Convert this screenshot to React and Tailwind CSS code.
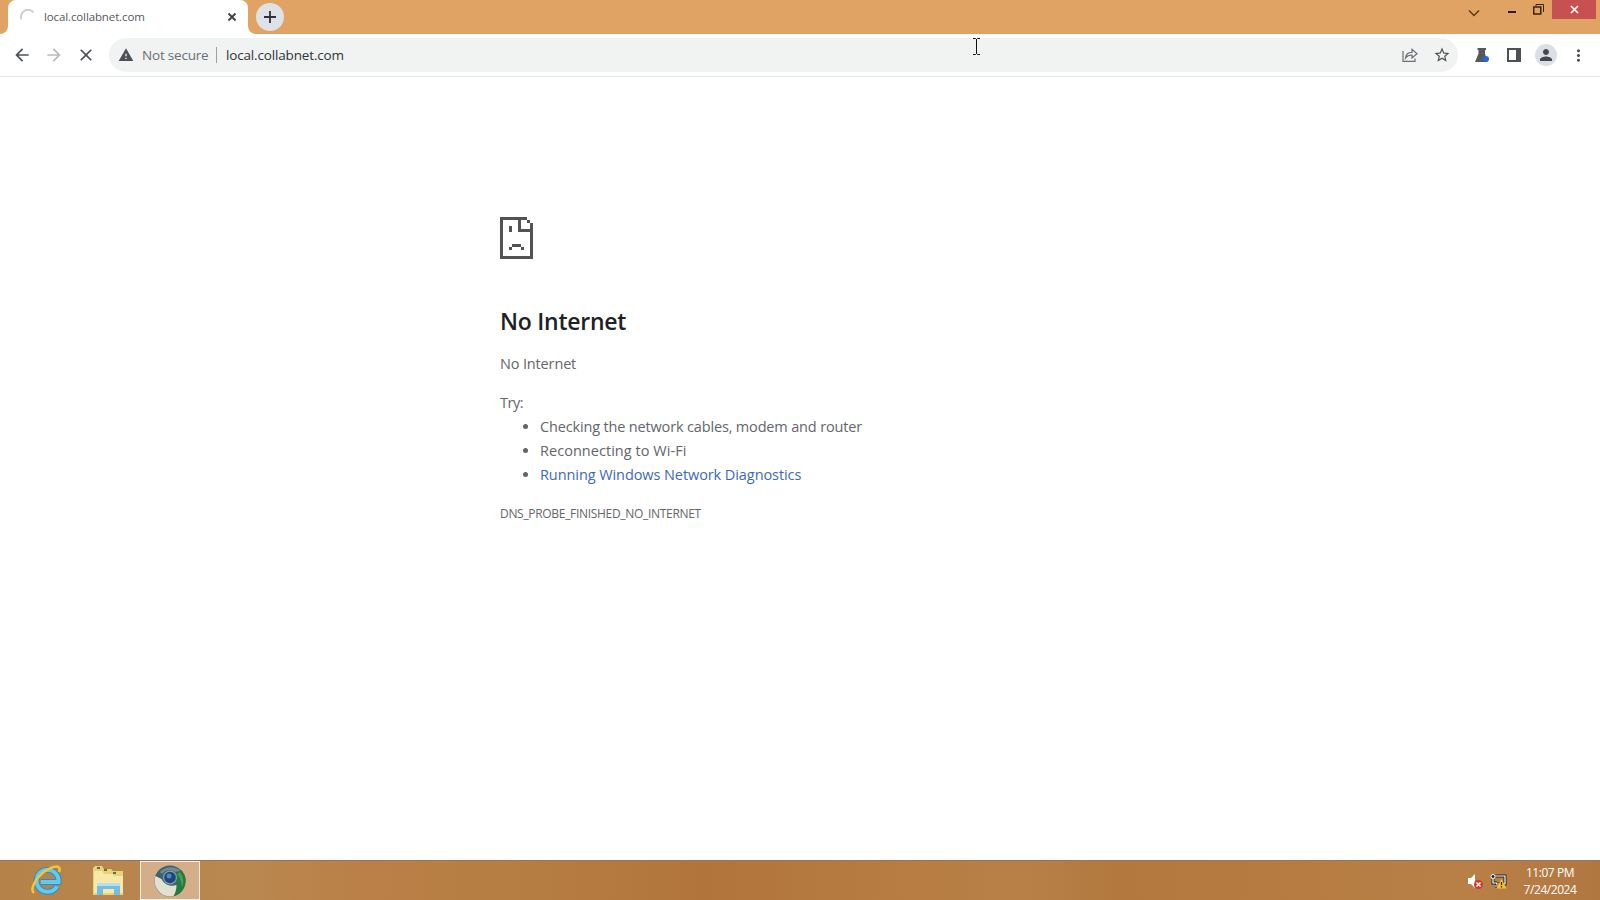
import React from 'react';
import { MdArrowBack, MdArrowForward, MdClose, MdWarning, MdStarBorder, MdMoreVert, MdPerson } from 'react-icons/md';

const tips = [
  { text: 'Checking the network cables, modem and router', className: 'tracking-[-0.16px]' },
  { text: 'Reconnecting to Wi-Fi', className: 'tracking-[0.04px]' },
  { text: 'Running Windows Network Diagnostics', className: 'tracking-[-0.08px]', link: true },
];

function TabStrip() {
  return (
    <div className="flex h-[34px] bg-[#e0a363]">
      <div className="relative ml-2 flex h-[34px] w-60 items-center rounded-t-lg bg-white pl-3">
        <svg className="absolute -left-2 bottom-0" width="8" height="8"><path d="M8 0v8H0a8 8 0 0 0 8-8Z" fill="#fff" /></svg>
        <svg className="absolute -right-2 bottom-0" width="8" height="8"><path d="M0 0v8h8a8 8 0 0 1-8-8Z" fill="#fff" /></svg>
        <svg width="16" height="16" viewBox="0 0 16 16" fill="none" stroke="#c9ccd1" strokeWidth="1.8">
          <path d="M1.5 10.5A7 7 0 0 1 13.5 3.5" />
        </svg>
        <span className="ml-2 w-[180px] text-[11.5px] leading-4 tracking-[-0.12px] text-[#55585c]">local.collabnet.com</span>
        <svg width="16" height="16" viewBox="0 0 16 16" stroke="#3c4043" strokeWidth="1.8">
          <path d="M4.5 4.5l7 7M11.5 4.5l-7 7" />
        </svg>
      </div>
      <button className="mt-[3px] ml-2 flex size-7 items-center justify-center rounded-full bg-[#dee1e6]">
        <svg width="14" height="14" viewBox="0 0 14 14" stroke="#2d3034" strokeWidth="1.8"><path d="M7 1v12M1 7h12" /></svg>
      </button>
      <div className="ml-auto flex items-start">
        <svg className="mt-[9px] mr-7" width="12" height="8" viewBox="0 0 12 8" fill="none" stroke="#5c3517" strokeWidth="1.4"><path d="M1 1.5l5 5 5-5" /></svg>
        <svg className="mt-[3px] mr-[17px]" width="8" height="12"><path d="M0 8h8v2H0z" fill="#2b1a10" /></svg>
        <svg className="mt-1 mr-2" width="11" height="11" viewBox="0 0 11 11" fill="none" stroke="#3b2313">
          <path d="M.75 3h7v7h-7z" strokeWidth="1.5" /><path d="M3 .5h7.5v7.5M3 .5V2" />
        </svg>
        <button className="mr-1 flex h-[19px] w-11 items-center justify-center bg-[#c75050]">
          <svg width="9" height="9" viewBox="0 0 9 9" stroke="#fff" strokeWidth="1.7"><path d="M1 1l7 7M8 1l-7 7" /></svg>
        </button>
      </div>
    </div>
  );
}

function Toolbar() {
  return (
    <div className="flex h-[43px] items-center border-b border-[#e3e5e8] bg-white pl-3">
      <div className="flex items-center gap-3">
        <MdArrowBack size={20} color="#4d5156" />
        <MdArrowForward size={20} color="#b9bbbe" />
        <MdClose size={20} color="#4d5156" />
      </div>
      <div className="ml-[13px] flex h-[34px] w-[1349px] items-center rounded-full bg-[#f1f3f3] pl-[9px]">
        <MdWarning size={16} color="#4d5156" />
        <span className="ml-2 w-[74px] text-[13.5px] tracking-[-0.2px] whitespace-nowrap text-[#6b6e72]">Not secure</span>
        <span className="h-4 w-px bg-[#9aa0a6]" />
        <span className="ml-[9px] text-[13.5px] tracking-[-0.16px] text-[#303336]">local.collabnet.com</span>
        <svg className="mr-[15px] ml-auto" width="16" height="16" viewBox="0 0 16 16" fill="none" stroke="#6b6e72" strokeWidth="1.2">
          <path d="M1 4v10.400h12V11.500M3.500 11c.4-3.500 2.500-5.500 6.500-5.600V2.300L15 6.700l-5 4.200V8c-3 0-5 1-6.500 3Z" />
        </svg>
        <MdStarBorder className="mr-[7px]" size={18} color="#4d5156" />
      </div>
      <div className="ml-[16px] flex items-center">
        <svg width="16" height="16" viewBox="0 0 16 16">
          <path d="M3.500 1h8.500v2h-1v3.500L13.500 15H1l3.500-8.500V3h-1z" fill="#55595e" /><circle cx="12" cy="12" r="3" fill="#2463eb" />
        </svg>
        <svg className="ml-4" width="16" height="16" viewBox="0 0 16 16">
          <path d="M1 1h14v14H1zM3 3v10h7V3z" fillRule="evenodd" fill="#4d5156" />
        </svg>
        <span className="ml-[13px] flex size-[22px] items-center justify-center rounded-full bg-[#dcdfe6]">
          <MdPerson size={18} color="#454a52" />
        </span>
        <MdMoreVert className="ml-3" size={19} color="#4d5156" />
      </div>
    </div>
  );
}

function SadPage() {
  return (
    <svg width="33" height="42" viewBox="0 0 11 14" fill="#535353" shapeRendering="crispEdges">
      <path d="M0 0h9v1H7v3h3V2h1v12H0zM1 1v12h9V5H6V1z" fillRule="evenodd" />
      <path d="M9 1h1v1H9zM3 3h1v2H3zM4 9h3v1H4zM3 10h1v1H3zM7 10h1v1H7z" />
    </svg>
  );
}

function ErrorPage() {
  return (
    <main className="flex-1 bg-white pt-[140px] pl-[500px] text-[14.5px] leading-6 text-[#646669]">
      <SadPage />
      <h1 className="mt-[46px] text-[23px] leading-8 font-semibold tracking-[-0.25px] text-[#202124]">No Internet</h1>
      <p className="mt-[15px] tracking-[-0.15px]">No Internet</p>
      <p className="mt-[15px] tracking-[-0.5px]">Try:</p>
      <ul className="list-disc pl-10">
        {tips.map(tip => (
          <li key={tip.text} className={tip.className}>
            {tip.link ? <a className="text-[#3d69b8]">{tip.text}</a> : tip.text}
          </li>
        ))}
      </ul>
      <div className="mt-[15px] text-[12px] tracking-[-0.31px]">DNS_PROBE_FINISHED_NO_INTERNET</div>
    </main>
  );
}

function ExplorerIcon() {
  return (
    <svg width="32" height="32" viewBox="0 0 32 32">
      <path d="M1 3l2-2h7l2 3h7l2 2h10v24H1z" fill="#ead27c" />
      <path d="M2 6h8l2 3h8l2 2h9v17H2z" fill="#f8e9a8" />
      <path d="M5 2h3v2H5zM12 4h3v2h-3zM21 7h3v2h-3z" fill="#4f7653" />
      <path d="M5 18h23v12h-6v-6H11v6H5z" fill="#73bfe3" />
      <path d="M5 18h23v3H5z" fill="#b5e1ef" />
    </svg>
  );
}

function IeIcon() {
  return (
    <svg width="32" height="32" viewBox="0 0 32 32" fill="none">
      <path d="M26 21.500A11 11 0 1 1 27.500 17H10" stroke="#278dcc" strokeWidth="6" />
      <path d="M26 21.500A11 11 0 1 1 27.500 17H10" stroke="#63c9ee" strokeWidth="4" />
      <path d="M3 28C-2 24 7 8 20 3c7-3 10-1 8 4" stroke="#f5c535" strokeWidth="2.500" />
    </svg>
  );
}

function ChromiumIcon() {
  return (
    <svg width="32" height="32" viewBox="0 0 32 32">
      <circle cx="16" cy="16" r="15.500" fill="#41606c" />
      <path d="M6 7C11 1 22 1 27 6l-6 1C16 4 11 5 8 9z" fill="#6f8a90" />
      <path d="M27 5a15.500 15.500 0 0 1-9 26.300C23 26 25 18 21 9z" fill="#237c3b" />
      <path d="M26 7c4 6 4 11 2 15-1-6-2-10-5-13z" fill="#4a9a59" />
      <path d="M1.500 11a15.500 15.500 0 0 0 18 20c2-3 3-7 3-11-6 2-12 0-15-6z" fill="#e2e1d0" />
      <circle cx="16" cy="12.500" r="7" fill="#7fa0b8" />
      <circle cx="16" cy="12.500" r="5.800" fill="#1d4677" />
      <circle cx="15" cy="11" r="2.500" fill="#5485b5" />
    </svg>
  );
}

function Taskbar() {
  return (
    <footer className="flex h-10 border-t border-[#96755f] bg-[linear-gradient(90deg,#b5834a_0%,#b98750_16%,#ba8047_22%,#b67d42_33%,#b1753b_44%,#b67b40_54%,#b88047_64%,#b2783e_70%,#b67c42_82%,#b88047_92%,#b07840_100%)]">
      <div className="flex h-full w-[140px] items-center gap-[29px] pl-[31px]">
        <IeIcon />
        <ExplorerIcon />
      </div>
      <div className="flex h-full w-[60px] items-center justify-center border border-[#fff0df] bg-[#d3ae89]">
        <ChromiumIcon />
      </div>
      <div className="ml-auto flex h-full items-center">
        <svg width="16" height="16" viewBox="0 0 16 16">
          <path d="M1 5h3l4-4v14l-4-4H1z" fill="#fff" />
          <circle cx="11.500" cy="11.500" r="4.500" fill="#d33b2c" />
          <path d="M9.500 9.500l4 4M13.500 9.500l-4 4" stroke="#fff" strokeWidth="1.500" />
        </svg>
        <svg className="ml-[7px]" width="17" height="16" viewBox="0 0 17 16" fill="none">
          <path d="M5 3h10v8H6M3 6v4h4M9 13H5" stroke="#2a2018" strokeWidth="3" />
          <path d="M5 3h10v8H6M3 6v4h4M9 13H5" stroke="#fff" strokeWidth="1.200" />
          <circle cx="3" cy="3.500" r="2" fill="#2a2018" stroke="#fff" />
          <path d="M11.500 6l5 9.500h-10z" fill="#f5c02d" />
          <path d="M11.500 9v3M11.500 13v1.500" stroke="#30230d" strokeWidth="1.300" />
        </svg>
        <div className="mr-[22px] ml-[15px] w-[56px] text-center text-[12px] leading-[17px] tracking-[-0.45px] whitespace-nowrap text-white">
          <div>11:07 PM</div>
          <div>7/24/2024</div>
        </div>
      </div>
    </footer>
  );
}

function TextCursor() {
  return (
    <svg className="absolute top-[38px] left-[972px]" width="9" height="17" viewBox="0 0 9 17" fill="none" stroke="#111">
      <path d="M1 .5h2.500l1 1 1-1H8M4.500 1v15M1 16.500h2.500l1-1 1 1H8" />
    </svg>
  );
}

export default function App() {
  return (
    <div className="relative flex h-[900px] w-[1600px] flex-col overflow-hidden bg-white font-['Open_Sans',sans-serif]">
      <TabStrip />
      <Toolbar />
      <ErrorPage />
      <Taskbar />
      <TextCursor />
    </div>
  );
}
